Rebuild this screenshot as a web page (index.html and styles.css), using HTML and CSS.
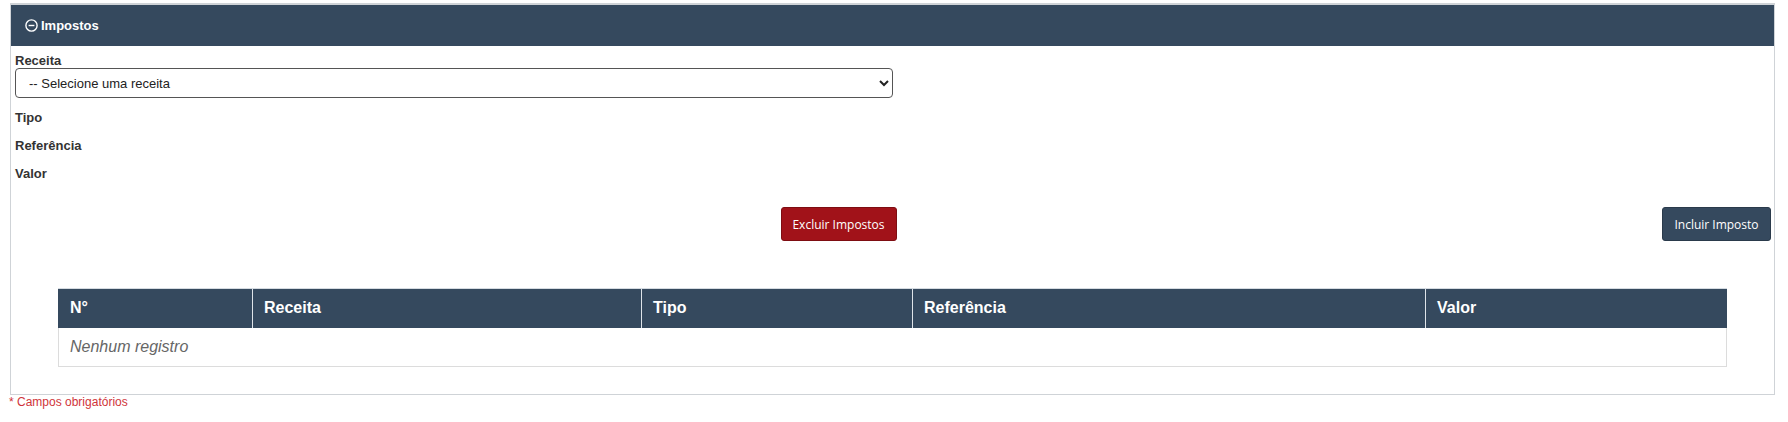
FILE: index.html
```html
<!DOCTYPE html>
<html lang="pt-BR">
<head>
<meta charset="utf-8">
<title>Impostos</title>
<link rel="stylesheet" href="styles.css">
</head>
<body>
<div class="page">
  <section class="panel">
    <header class="panel-head">
      <svg class="collapse-icon" width="13" height="13" viewBox="0 0 13 13" aria-hidden="true">
        <circle cx="6.5" cy="6.5" r="5.6" fill="none" stroke="#fff" stroke-width="1.4"/>
        <line x1="3.6" y1="6.5" x2="9.4" y2="6.5" stroke="#fff" stroke-width="1.4"/>
      </svg>
      <span class="panel-title">Impostos</span>
    </header>
    <div class="panel-body">
      <div class="field">
        <label class="field-label" for="receita">Receita</label>
        <select id="receita" class="field-select">
          <option>-- Selecione uma receita</option>
        </select>
      </div>
      <div class="field-static">Tipo</div>
      <div class="field-static">Referência</div>
      <div class="field-static">Valor</div>

      <div class="actions">
        <div class="actions-center">
          <button class="btn btn-danger" type="button">Excluir Impostos</button>
        </div>
        <button class="btn btn-primary" type="button">Incluir Imposto</button>
      </div>

      <table class="grid">
        <colgroup>
          <col class="c1"><col class="c2"><col class="c3"><col class="c4"><col class="c5">
        </colgroup>
        <thead>
          <tr><th>N°</th><th>Receita</th><th>Tipo</th><th>Referência</th><th>Valor</th></tr>
        </thead>
        <tbody>
          <tr><td class="empty" colspan="5">Nenhum registro</td></tr>
        </tbody>
      </table>
    </div>
  </section>
  <p class="required-note">* Campos obrigatórios</p>
</div>
</body>
</html>
```

FILE: styles.css
```css
* { box-sizing: border-box; }

html, body {
  margin: 0;
  padding: 0;
  background: #fff;
  font-family: "Liberation Sans", Arial, sans-serif;
  color: #333;
}

.page {
  padding: 3px 13px 0 10px;
}

.panel {
  border: 1px solid #cfd3d7;
  border-top: 2px solid #cfd3d7;
}

.panel-head {
  height: 41px;
  background: #35495e;
  color: #fff;
  display: flex;
  align-items: center;
  padding-left: 14px;
  gap: 3px;
}

.collapse-icon { display: block; }

.panel-title {
  font-size: 13px;
  font-weight: bold;
  line-height: 15px;
}

.panel-body {
  padding: 7px 3px 27px 4px;
}

.field-label {
  display: block;
  font-size: 13px;
  font-weight: bold;
  line-height: 15px;
  color: #333;
}

.field-select {
  display: block;
  width: 878px;
  height: 30px;
  margin: 0;
  padding: 0 8px 0 9px;
  font-family: "Liberation Sans", Arial, sans-serif;
  font-size: 13px;
  color: #222;
  background: #fff;
  border: 1px solid #555;
  border-radius: 4px;
}

.field-static {
  font-size: 13px;
  font-weight: bold;
  line-height: 15px;
  color: #333;
  margin-top: 13px;
}

.field + .field-static { margin-top: 12px; }

.actions {
  display: flex;
  align-items: center;
  margin-top: 26px;
}

.actions-center {
  flex: 1;
  display: flex;
  justify-content: center;
}

.btn {
  height: 34px;
  border-radius: 3px;
  font-family: "Open Sans", "Noto Sans", sans-serif;
  font-size: 12px;
  color: #fff;
  cursor: pointer;
  padding: 0 10px;
}

.btn-danger {
  width: 116px;
  background: #a11219;
  border: 1px solid #7e0d12;
}

.btn-primary {
  width: 109px;
  background: #35495e;
  border: 1px solid #2a3a4b;
}

.grid {
  width: 1668px;
  margin: 47px 0 0 43px;
  border-collapse: collapse;
  table-layout: fixed;
}

.c1 { width: 194px; }
.c2 { width: 389px; }
.c3 { width: 271px; }
.c4 { width: 513px; }
.c5 { width: 301px; }

.grid th {
  height: 39px;
  background: #35495e;
  color: #fff;
  text-align: left;
  font-size: 16px;
  font-weight: bold;
  padding: 0 11px;
  border-top: 1px solid #d5dbe1;
  border-left: 1px solid #dfe4e9;
}

.grid th:first-child { border-left: 1px solid #35495e; }

.grid td {
  height: 39px;
  padding: 0 11px;
  border: 1px solid #dcdcdc;
  border-top: 0;
}

.grid .empty {
  font-style: italic;
  font-size: 16px;
  color: #666;
}

.required-note {
  margin: 0 0 0 -1px;
  font-size: 12px;
  line-height: 14px;
  color: #d0343a;
}
```
